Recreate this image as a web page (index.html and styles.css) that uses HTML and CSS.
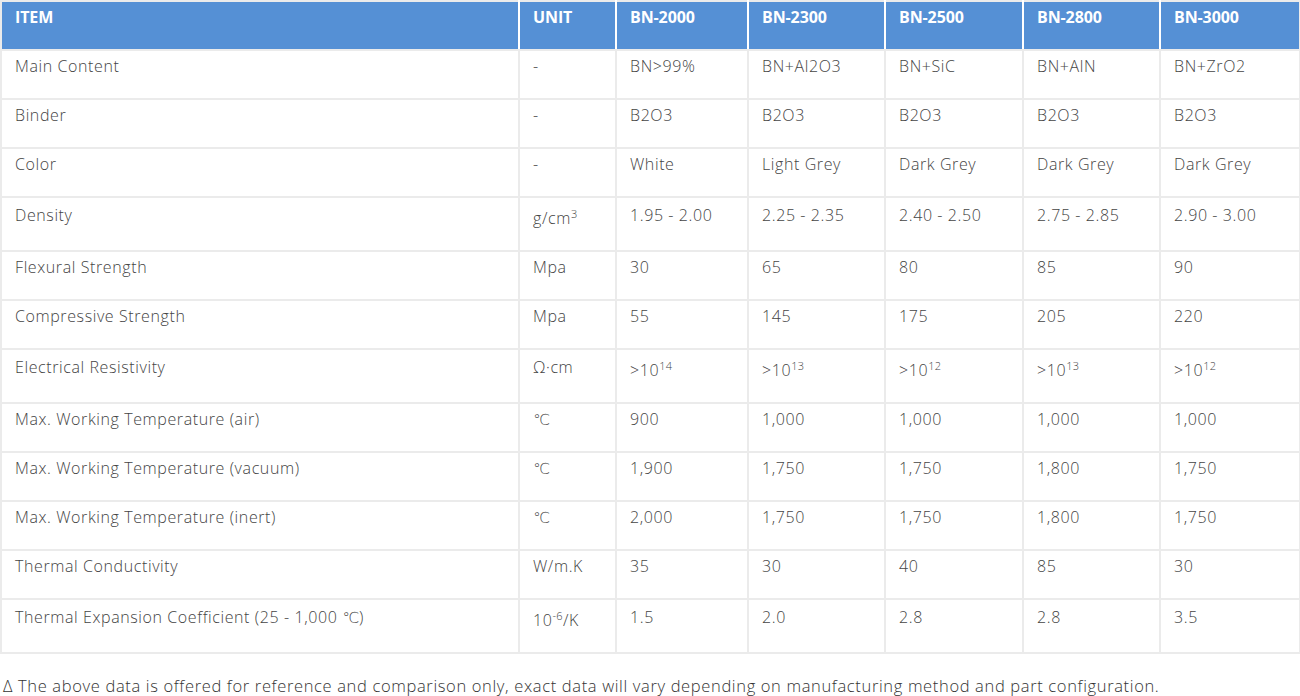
FILE: index.html
```html
<!DOCTYPE html>
<html>
<head>
<meta charset="utf-8">
<link rel="stylesheet" href="styles.css">
</head>
<body>
<table class="spec">
  <colgroup>
    <col class="c-item"><col class="c-unit"><col class="c-a"><col class="c-b"><col class="c-c"><col class="c-d"><col class="c-e">
  </colgroup>
  <thead>
    <tr><th>ITEM</th><th>UNIT</th><th>BN-2000</th><th>BN-2300</th><th>BN-2500</th><th>BN-2800</th><th>BN-3000</th></tr>
  </thead>
  <tbody>
    <tr><td>Main Content</td><td>-</td><td>BN&gt;99%</td><td>BN+Al2O3</td><td>BN+SiC</td><td>BN+AlN</td><td>BN+ZrO2</td></tr>
    <tr><td>Binder</td><td>-</td><td>B2O3</td><td>B2O3</td><td>B2O3</td><td>B2O3</td><td>B2O3</td></tr>
    <tr><td>Color</td><td>-</td><td>White</td><td>Light Grey</td><td>Dark Grey</td><td>Dark Grey</td><td>Dark Grey</td></tr>
    <tr class="tall"><td>Density</td><td class="low">g/cm<sup>3</sup></td><td>1.95 - 2.00</td><td>2.25 - 2.35</td><td>2.40 - 2.50</td><td>2.75 - 2.85</td><td>2.90 - 3.00</td></tr>
    <tr><td>Flexural Strength</td><td>Mpa</td><td>30</td><td>65</td><td>80</td><td>85</td><td>90</td></tr>
    <tr><td>Compressive Strength</td><td>Mpa</td><td>55</td><td>145</td><td>175</td><td>205</td><td>220</td></tr>
    <tr class="tall"><td>Electrical Resistivity</td><td>Ω·cm</td><td class="low">&gt;10<sup>14</sup></td><td class="low">&gt;10<sup>13</sup></td><td class="low">&gt;10<sup>12</sup></td><td class="low">&gt;10<sup>13</sup></td><td class="low">&gt;10<sup>12</sup></td></tr>
    <tr><td>Max. Working Temperature (air)</td><td><span class="deg">℃</span></td><td>900</td><td>1,000</td><td>1,000</td><td>1,000</td><td>1,000</td></tr>
    <tr><td>Max. Working Temperature (vacuum)</td><td><span class="deg">℃</span></td><td>1,900</td><td>1,750</td><td>1,750</td><td>1,800</td><td>1,750</td></tr>
    <tr><td>Max. Working Temperature (inert)</td><td><span class="deg">℃</span></td><td>2,000</td><td>1,750</td><td>1,750</td><td>1,800</td><td>1,750</td></tr>
    <tr><td>Thermal Conductivity</td><td>W/m.K</td><td>35</td><td>30</td><td>40</td><td>85</td><td>30</td></tr>
    <tr class="tall"><td>Thermal Expansion Coefficient (25 - 1,000 <span class="deg">℃</span>)</td><td class="low">10<sup>-6</sup>/K</td><td>1.5</td><td>2.0</td><td>2.8</td><td>2.8</td><td>3.5</td></tr>
  </tbody>
</table>
<p class="note">Δ The above data is offered for reference and comparison only, exact data will vary depending on manufacturing method and part configuration.</p>
</body>
</html>
```
FILE: styles.css
```css
html, body {
  margin: 0;
  padding: 0;
  background: #ffffff;
}
body {
  font-family: "Open Sans", "Liberation Sans", sans-serif;
  font-weight: 300;
  font-size: 16px;
  letter-spacing: 0.6px;
  color: #444444;
}
.spec {
  border-collapse: collapse;
  table-layout: fixed;
  width: 1299px;
  border: 2px solid #ebebeb;
}
.c-item { width: 518px; }
.c-unit { width: 97px; }
.c-a { width: 132px; }
.c-b { width: 137px; }
.c-c { width: 138px; }
.c-d { width: 137px; }
.c-e { width: 140px; }
.spec th {
  background: #5590d5;
  color: #ffffff;
  font-weight: 700;
  font-size: 16px;
  letter-spacing: -0.1px;
  text-align: left;
  vertical-align: top;
  padding: 4px 13px 21px;
  line-height: 22px;
  border-left: 2px solid #ffffff;
  border-bottom: 2px solid #ebebeb;
}
.spec th:first-child { border-left: 2px solid #ebebeb; }
.spec td {
  text-align: left;
  vertical-align: top;
  padding: 4px 13px 21px;
  line-height: 22px;
  border: 2px solid #ebebeb;
}
.spec tr.tall td {
  padding-top: 6px;
  padding-bottom: 24px;
}
.spec tr.tall td.low {
  padding-top: 9px;
  padding-bottom: 21px;
}
.spec sup {
  font-size: 11px;
  line-height: 0;
  vertical-align: 6px;
  letter-spacing: 0.3px;
}
.deg {
  font-family: "DejaVu Sans", sans-serif;
  font-weight: 200;
  font-size: 15px;
  line-height: 0;
  letter-spacing: 0;
}
.note {
  margin: 21px 0 0 3px;
  font-size: 16.5px;
  letter-spacing: 0.65px;
  line-height: 22px;
  color: #333333;
}
```
